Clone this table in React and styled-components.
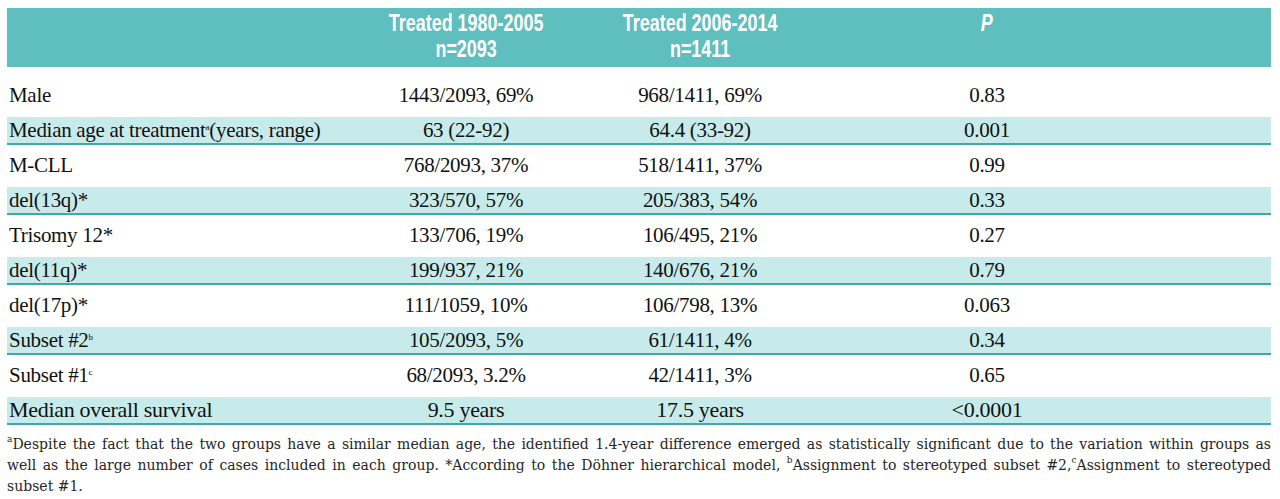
import React from 'react';
import styled, { createGlobalStyle } from 'styled-components';

const GlobalStyle = createGlobalStyle`
  html, body {
    margin: 0;
    padding: 0;
    background: #ffffff;
  }
`;

const Page = styled.div`
  width: 1264px;
  padding: 8px 0 0 7px;
`;

const Grid = styled.div`
  display: grid;
  grid-template-columns: 343px 232px 236px 338px 1fr;
  align-items: center;
`;

const HeaderRow = styled(Grid)`
  height: 59px;
  background: #5fbebe;
  align-items: start;
`;

const HeadCell = styled.div`
  grid-column: ${(props) => props.col};
  display: flex;
  justify-content: center;
  padding-top: 2px;
`;

const HeadText = styled.div`
  text-align: center;
  color: #ffffff;
  font-family: "Liberation Sans", Arial, sans-serif;
  font-weight: 700;
  font-size: 23px;
  line-height: 26px;
  white-space: nowrap;
  transform: scaleX(0.78);
  font-style: ${(props) => (props.italic ? 'italic' : 'normal')};
`;

const Body = styled.div`
  display: flex;
  flex-direction: column;
  gap: 7px;
  margin-top: 15px;
`;

const Row = styled(Grid)`
  height: 28px;
  box-sizing: border-box;
  background: ${(props) => (props.shaded ? '#c7ebeb' : 'transparent')};
  border-bottom: 2px solid ${(props) => (props.shaded ? '#3fa9a9' : 'transparent')};
  font-family: "Liberation Serif", serif;
  font-size: ${(props) => (props.big ? '22px' : '21px')};
  letter-spacing: -0.3px;
  color: #111111;
`;

const Label = styled.div`
  padding-left: 2px;
  white-space: nowrap;
`;

const Value = styled.div`
  text-align: center;
  white-space: nowrap;
`;

const Sup = styled.sup`
  font-size: 9px;
  vertical-align: 7px;
  line-height: 0;
`;

const Notes = styled.div`
  margin-top: 9px;
  font-family: "DejaVu Serif", serif;
  font-size: 14px;
  line-height: 21px;
  color: #262626;
`;

const NoteLine = styled.div`
  text-align: justify;
  text-align-last: ${(props) => (props.last ? 'left' : 'justify')};
  white-space: nowrap;
`;

const rows = [
  ['Male', '1443/2093, 69%', '968/1411, 69%', '0.83'],
  [<>Median age at treatment<Sup>a</Sup>(years, range)</>, '63 (22-92)', '64.4 (33-92)', '0.001'],
  ['M-CLL', '768/2093, 37%', '518/1411, 37%', '0.99'],
  ['del(13q)*', '323/570, 57%', '205/383, 54%', '0.33'],
  ['Trisomy 12*', '133/706, 19%', '106/495, 21%', '0.27'],
  ['del(11q)*', '199/937, 21%', '140/676, 21%', '0.79'],
  ['del(17p)*', '111/1059, 10%', '106/798, 13%', '0.063'],
  [<>Subset #2<Sup>b</Sup></>, '105/2093, 5%', '61/1411, 4%', '0.34'],
  [<>Subset #1<Sup>c</Sup></>, '68/2093, 3.2%', '42/1411, 3%', '0.65'],
  ['Median overall survival', '9.5 years', '17.5 years', '<0.0001'],
];

export default function App() {
  return (
    <Page>
      <GlobalStyle />
      <HeaderRow>
        <HeadCell col={2}>
          <HeadText>
            Treated 1980-2005
            <br />
            n=2093
          </HeadText>
        </HeadCell>
        <HeadCell col={3}>
          <HeadText>
            Treated 2006-2014
            <br />
            n=1411
          </HeadText>
        </HeadCell>
        <HeadCell col={4}>
          <HeadText italic>P</HeadText>
        </HeadCell>
      </HeaderRow>
      <Body>
        {rows.map((r, i) => (
          <Row key={i} shaded={i % 2 === 1} big={i === rows.length - 1}>
            <Label>{r[0]}</Label>
            <Value>{r[1]}</Value>
            <Value>{r[2]}</Value>
            <Value>{r[3]}</Value>
          </Row>
        ))}
      </Body>
      <Notes>
        <NoteLine>
          <Sup>a</Sup>Despite the fact that the two groups have a similar median age, the identified 1.4-year difference
          emerged as statistically significant due to the variation within groups as
        </NoteLine>
        <NoteLine>
          well as the large number of cases included in each group. *According to the Döhner hierarchical model,{' '}
          <Sup>b</Sup>Assignment to stereotyped subset #2,<Sup>c</Sup>Assignment to stereotyped
        </NoteLine>
        <NoteLine last>subset #1.</NoteLine>
      </Notes>
    </Page>
  );
}
